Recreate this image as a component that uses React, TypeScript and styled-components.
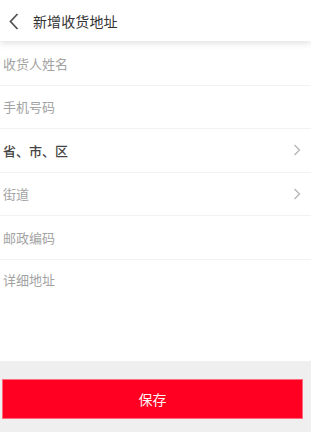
import { FC } from "react";
import styled, { createGlobalStyle } from "styled-components";

const GlobalStyle = createGlobalStyle`
  html, body {
    margin: 0;
    padding: 0;
    background: #ffffff;
  }
  body {
    font-family: "Noto Sans CJK SC", "Noto Sans", sans-serif;
  }
  * {
    box-sizing: border-box;
  }
`;

interface IField {
  name: string;
  type: "input" | "select" | "textarea";
  filled?: boolean;
}

const fields: IField[] = [
  { name: "收货人姓名", type: "input" },
  { name: "手机号码", type: "input" },
  { name: "省、市、区", type: "select", filled: true },
  { name: "街道", type: "select" },
  { name: "邮政编码", type: "input" },
  { name: "详细地址", type: "textarea" },
];

const ChevronRight: FC = () => (
  <svg width="8" height="12" viewBox="0 0 8 12" fill="none">
    <path d="M1.5 1 L6.5 6 L1.5 11" stroke="#b5b5b5" strokeWidth="1.3" />
  </svg>
);

const ChevronLeft: FC = () => (
  <svg width="10" height="17" viewBox="0 0 10 17" fill="none">
    <path d="M8.5 1 L1.5 8.5 L8.5 16" stroke="#555" strokeWidth="1.8" />
  </svg>
);

const App: FC = () => {
  return (
    <Page>
      <GlobalStyle />
      <Header>
        <BackButton>
          <ChevronLeft />
        </BackButton>
        <Title>新增收货地址</Title>
      </Header>
      <Form>
        {fields.map((item) =>
          item.type === "textarea" ? (
            <TallRow key={item.name}>
              <TextArea placeholder={item.name} />
            </TallRow>
          ) : (
            <Row key={item.name}>
              {item.type === "input" ? (
                <Input placeholder={item.name} />
              ) : (
                <>
                  <SelectText filled={item.filled}>{item.name}</SelectText>
                  <ChevronRight />
                </>
              )}
            </Row>
          )
        )}
      </Form>
      <Footer>
        <SaveButton>保存</SaveButton>
      </Footer>
    </Page>
  );
};

export default App;

const Page = styled.div`
  width: 311px;
  height: 432px;
  display: flex;
  flex-direction: column;
  background: #ffffff;
  overflow: hidden;
`;

const Header = styled.div`
  height: 41px;
  display: flex;
  align-items: center;
  background: #ffffff;
  box-shadow: 0 2px 7px rgba(0, 0, 0, 0.13);
  position: relative;
  z-index: 1;
`;

const BackButton = styled.div`
  width: 33px;
  display: flex;
  justify-content: center;
  padding-right: 6px;
  padding-top: 1px;
`;

const Title = styled.div`
  font-size: 14px;
  color: #333333;
  letter-spacing: 0.1px;
`;

const Form = styled.div`
  display: flex;
  flex-direction: column;
  padding-top: 1px;
`;

const Row = styled.div`
  height: 43.5px;
  display: flex;
  align-items: center;
  justify-content: space-between;
  padding: 0 10px 0 3px;
  border-bottom: 1px solid #f2f2f2;
`;

const TallRow = styled.div`
  height: 101px;
  display: flex;
  padding: 10px 10px 0 3px;
`;

const Input = styled.input`
  border: none;
  outline: none;
  width: 100%;
  padding: 0;
  font-family: inherit;
  font-size: 13px;
  color: #333;
  background: transparent;
  &::placeholder {
    color: #a3a3a3;
  }
`;

const TextArea = styled.textarea`
  border: none;
  outline: none;
  resize: none;
  width: 100%;
  height: 80px;
  padding: 0;
  font-family: inherit;
  font-size: 13px;
  line-height: 19px;
  color: #333;
  background: transparent;
  &::placeholder {
    color: #a3a3a3;
  }
`;

const SelectText = styled.span<{ filled?: boolean }>`
  font-size: 13px;
  color: ${({ filled }) => (filled ? "#444444" : "#a3a3a3")};
  font-weight: ${({ filled }) => (filled ? 500 : 400)};
`;

const Footer = styled.div`
  flex: 1;
  background: #efefef;
  padding: 18px 8px 0 2px;
`;

const SaveButton = styled.button`
  width: 100%;
  height: 40px;
  border: 1px solid #ff6a7c;
  background: #ff0022;
  color: #fff4f5;
  font-family: inherit;
  font-size: 14px;
  padding: 0;
  cursor: pointer;
`;
